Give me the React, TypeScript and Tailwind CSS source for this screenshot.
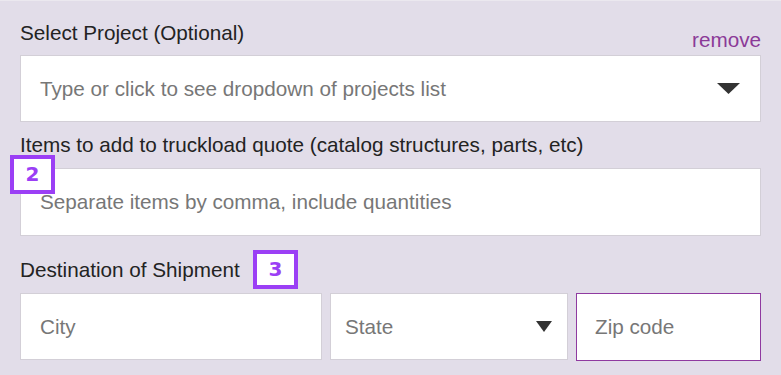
import React from 'react';

const font = { fontFamily: '"Liberation Sans", Arial, sans-serif' };

function Caret({ className }: { className: string }) {
  return (
    <svg className={className} viewBox="0 0 24 12" preserveAspectRatio="none">
      <path d="M0 0 H24 L12 12 Z" fill="#333333" />
    </svg>
  );
}

function Badge({ n, className }: { n: string; className: string }) {
  return (
    <div
      className={`absolute flex h-[39px] w-[45px] items-start justify-center border-[4px] border-[#9b3ff5] bg-white pt-[3px] text-[20px] font-bold leading-[24px] text-[#9b3ff5] ${className}`}
      style={{ fontFamily: '"DejaVu Sans", sans-serif' }}
    >
      {n}
    </div>
  );
}

export default function App() {
  return (
    <div
      className="min-h-[375px] w-full border-t border-[#ebe8ef] bg-[#e2dde9] px-[20px] pt-[20px] text-[20.7px] leading-[24px]"
      style={font}
    >
      {/* Project */}
      <div className="flex h-[34px] justify-between">
        <label className="self-start text-[#232323]">Select Project (Optional)</label>
        <button className="mb-[3px] self-end text-[#8b3a98]">remove</button>
      </div>
      <div className="flex h-[67px] items-center justify-between border border-[#d3cfd7] bg-white pl-[19px] pr-[20px]">
        <span className="text-[#777777]">Type or click to see dropdown of projects list</span>
        <Caret className="h-[11px] w-[23px]" />
      </div>

      {/* Items */}
      <div className="relative">
        <div className="mt-[11px] mb-[11px] text-[#232323]">
          Items to add to truckload quote (catalog structures, parts, etc)
        </div>
        <div className="flex h-[68px] items-center border border-[#d3cfd7] bg-white pl-[19px]">
          <span className="text-[#777777]">Separate items by comma, include quantities</span>
        </div>
        <Badge n="2" className="left-[-10px] top-[22px]" />
      </div>

      {/* Destination */}
      <div className="relative">
        <div className="mt-[22px] mb-[11px] text-[#232323]">Destination of Shipment</div>
        <Badge n="3" className="left-[233px] top-[-8px]" />
        <div className="flex gap-[8px]">
          <div className="flex h-[67px] w-[302px] items-center border border-[#d3cfd7] bg-white pl-[19px]">
            <span className="text-[#777777]">City</span>
          </div>
          <div className="flex h-[67px] w-[238px] items-center justify-between border border-[#d3cfd7] bg-white pl-[14px] pr-[15px]">
            <span className="text-[#777777]">State</span>
            <Caret className="h-[11px] w-[16px]" />
          </div>
          <div className="flex h-[68px] flex-1 items-center border border-[#8f3aa0] bg-white pl-[18px]">
            <span className="text-[#777777]">Zip code</span>
          </div>
        </div>
      </div>
    </div>
  );
}
